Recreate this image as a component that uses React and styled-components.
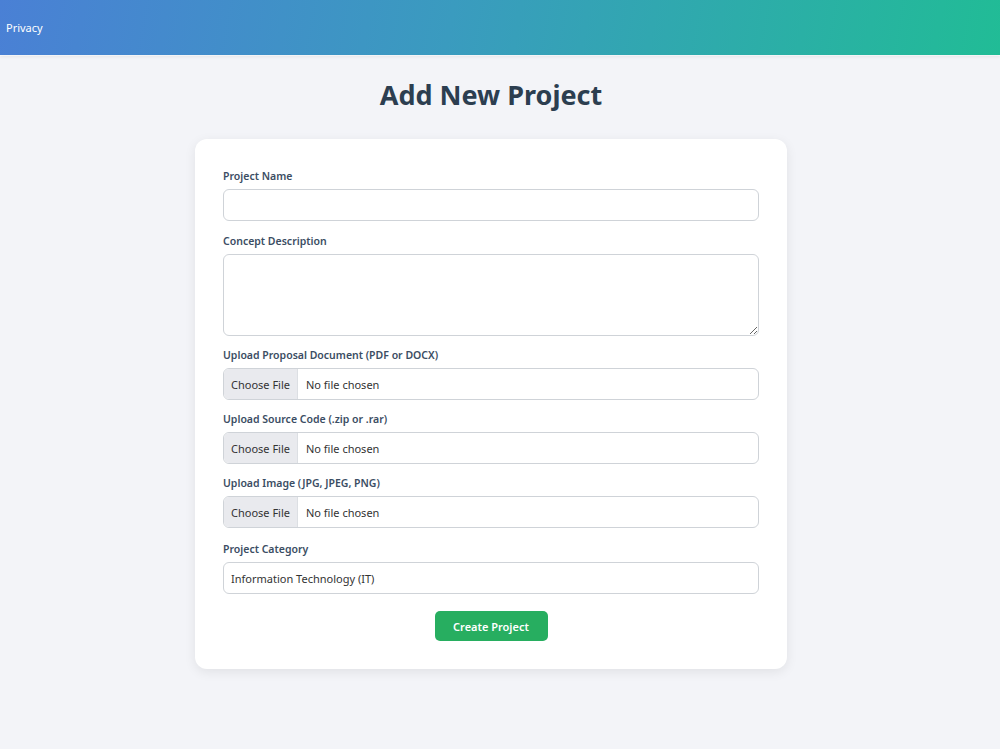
import React from "react";
import styled, { createGlobalStyle } from "styled-components";

const Global = createGlobalStyle`
  html, body { margin: 0; padding: 0; }
  body {
    background: #f3f4f8;
    font-family: "Noto Sans", "Open Sans", sans-serif;
    color: #2c3e50;
  }
  * { box-sizing: border-box; }
`;

const Header = styled.header`
  height: 55px;
  background: linear-gradient(100deg, #4a80d5 0%, #3a9bbf 45%, #21bc96 100%);
  box-shadow: 0 1px 0 rgba(255,255,255,0.5), 0 2px 3px rgba(0,0,0,0.06);
  display: flex;
  align-items: center;
  padding: 0 6px;
`;

const NavLink = styled.a`
  color: #fff;
  font-size: 11px;
  text-decoration: none;
`;

const Main = styled.main`
  display: flex;
  flex-direction: column;
  align-items: center;
  padding: 22px 18px 60px 0;
`;

const Title = styled.h1`
  margin: 0 0 26px;
  font-size: 27px;
  font-weight: 700;
  color: #2c3e50;
  line-height: 36px;
`;

const Card = styled.form`
  width: 592px;
  background: #fff;
  border-radius: 12px;
  box-shadow: 0 3px 12px rgba(0, 0, 0, 0.08);
  padding: 30px 28px 28px;
  display: flex;
  flex-direction: column;
`;

const Group = styled.div`
  display: flex;
  flex-direction: column;
  margin-bottom: ${(p) => 12 + (p.$extra || 0)}px;
`;

const Label = styled.label`
  font-size: 10.5px;
  font-weight: 600;
  color: #3b4d63;
  line-height: 14px;
  margin-bottom: 6px;
`;

const fieldBase = `
  width: 100%;
  border: 1px solid #cfd3d8;
  border-radius: 6px;
  background: #fff;
  font-family: "Noto Sans", "Open Sans", sans-serif;
  font-size: 11px;
  color: #333;
  outline: none;
`;

const TextInput = styled.input`
  ${fieldBase}
  height: 32px;
  padding: 0 7px;
`;

const TextArea = styled.textarea`
  ${fieldBase}
  height: 82px;
  padding: 7px;
  display: block;
`;

const FileInput = styled.input`
  ${fieldBase}
  height: 32px;
  padding: 0;
  overflow: hidden;
  &::file-selector-button {
    height: 30px;
    margin: 0 8px 0 0;
    padding: 0 7px;
    border: none;
    border-right: 1px solid #dcdfe3;
    background: #e9eaee;
    color: #333;
    font-family: "Noto Sans", "Open Sans", sans-serif;
    font-size: 11px;
  }
`;

const Select = styled.select`
  ${fieldBase}
  appearance: none;
  height: 32px;
  padding: 0 7px;
`;

const Submit = styled.button`
  align-self: center;
  margin-top: 5px;
  width: 113px;
  height: 30px;
  border: none;
  border-radius: 5px;
  background: #27ae60;
  color: #fff;
  font-family: "Noto Sans", "Open Sans", sans-serif;
  font-size: 11px;
  font-weight: 600;
`;

export default function App() {
  return (
    <>
      <Global />
      <Header>
        <NavLink href="#">Privacy</NavLink>
      </Header>
      <Main>
        <Title>Add New Project</Title>
        <Card onSubmit={(e) => e.preventDefault()}>
          <Group $extra={1}>
            <Label>Project Name</Label>
            <TextInput type="text" />
          </Group>
          <Group>
            <Label>Concept Description</Label>
            <TextArea />
          </Group>
          <Group>
            <Label>Upload Proposal Document (PDF or DOCX)</Label>
            <FileInput type="file" />
          </Group>
          <Group>
            <Label>Upload Source Code (.zip or .rar)</Label>
            <FileInput type="file" />
          </Group>
          <Group $extra={2}>
            <Label>Upload Image (JPG, JPEG, PNG)</Label>
            <FileInput type="file" />
          </Group>
          <Group>
            <Label>Project Category</Label>
            <Select defaultValue="it">
              <option value="it">Information Technology (IT)</option>
            </Select>
          </Group>
          <Submit type="submit">Create Project</Submit>
        </Card>
      </Main>
    </>
  );
}
